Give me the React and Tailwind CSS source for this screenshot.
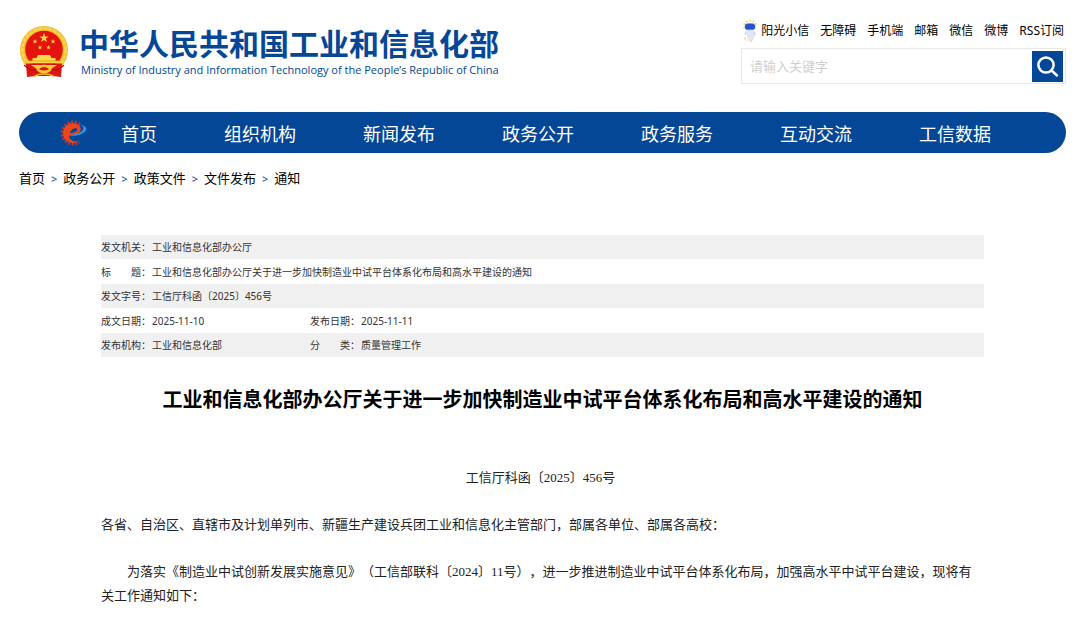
import React, { useState } from 'react';

const topLinks = ['无障碍', '手机端', '邮箱', '微信', '微博', 'RSS订阅'];

const navItems = ['首页', '组织机构', '新闻发布', '政务公开', '政务服务', '互动交流', '工信数据'];

const crumbs = ['首页', '政务公开', '政策文件', '文件发布', '通知'];

const metaRows = [
  [['发文机关：', '工业和信息化部办公厅']],
  [['标　　题：', '工业和信息化部办公厅关于进一步加快制造业中试平台体系化布局和高水平建设的通知']],
  [['发文字号：', '工信厅科函〔2025〕456号']],
  [['成文日期：', '2025-11-10'], ['发布日期：', '2025-11-11']],
  [['发布机构：', '工业和信息化部'], ['分　　类：', '质量管理工作']],
];

const STAR = 'M0 -1 L.235 -.324 .951 -.309 .38 .124 .588 .809 0 .4 -.588 .809 -.38 .124 -.951 -.309 -.235 -.324Z';

const Emblem = () => (
  <svg viewBox="0 0 50 54" className="w-[50px] h-[54px] shrink-0" aria-hidden="true">
    <circle cx="25" cy="25" r="24" fill="#f3bd2b" />
    <circle cx="25" cy="25" r="21.5" fill="none" stroke="#fad552" strokeWidth="2.5" strokeDasharray="4 1" />
    <circle cx="25" cy="24.5" r="18.8" fill="#e5130d" />
    <g fill="#fbd94a">
      <path d={STAR} transform="translate(25 13) scale(5)" />
      <path d={STAR} transform="translate(16 16.5) scale(2.6)" />
      <path d={STAR} transform="translate(34 16.5) scale(2.6)" />
      <path d={STAR} transform="translate(21 22.5) scale(2.4)" />
      <path d={STAR} transform="translate(29.5 22.5) scale(2.4)" />
      <path d="M19 30h12l1.5 3h4v3H42v2.500H8V36h5.500v-3h4z" />
    </g>
    <path d="M8 36h34" stroke="#e9a31f" strokeWidth="1" />
    <path d="M7 38.500h36l-1 13.500-8-1H16l-8 1z" fill="#dc1512" />
    <path d="M12 40h26l-6 4H18z" fill="#f8c93a" />
    <ellipse cx="25" cy="44" rx="7.5" ry="4.2" fill="#f8c93a" />
    <path d="M20 44q5-4 10 0-5 3-10 0z" fill="#e5130d" />
    <path d="M5 40q6 6 12 5M45 40q-6 6-12 5" fill="none" stroke="#b80f0d" strokeWidth="1.2" />
    <path d="M15 51.500q5-3 10-2.500 5-.5 10 2.500" fill="none" stroke="#f3bd2b" strokeWidth="1.6" />
  </svg>
);

const Robot = () => (
  <svg viewBox="0 0 14 22" className="w-[14px] h-[22px]" aria-hidden="true">
    <g fill="#f7cf4d">
      <circle cx="3.5" cy="1.5" r=".9" /><circle cx="7" cy=".9" r=".9" /><circle cx="10.5" cy="1.5" r=".9" />
      <circle cx="1.2" cy="4" r=".9" /><circle cx="12.8" cy="4" r=".9" /><circle cx=".9" cy="8" r=".8" />
      <circle cx="2" cy="18.5" r=".9" /><circle cx="8" cy="21" r=".9" /><circle cx="4.5" cy="20" r=".7" />
    </g>
    <rect x="1.5" y="3" width="11" height="7.6" rx="3.6" fill="#a9bff2" />
    <rect x="2" y="3.8" width="10" height="5.8" rx="2.8" fill="#2750cf" />
    <path d="M3.6 11h7.200l1.200 4.500-1.500 5H6l-2-4z" fill="#dfe7f8" />
    <path d="M3.6 11.500l-1.600 3.500M10.600 11.500l2 3.500" stroke="#c5d2ee" strokeWidth="1.300" />
  </svg>
);

const GearLogo = () => (
  <svg viewBox="0 0 28 28" className="w-7 h-7 shrink-0" aria-hidden="true">
    {/* gear teeth */}
    <path d="M21 5.2A11.2 11.2 0 1 0 20.500 23.400" fill="none" stroke="#d8301c" strokeWidth="2.600" strokeDasharray="2 1.700" />
    {/* gear body with the letter-like loop cut out */}
    <path d="M20.500 6.500A10 10 0 1 0 20.500 21.500c-3 1.500-7.500 1.200-9.300-1.400-.9-1.300-1-2.600-.8-3.900 5.500-.2 11-2 11.300-5.700.1-1.500-.5-3-1.200-4z" fill="#ee4519" />
    <path d="M10.800 14.200c.9-3 3.200-5 5.600-5 1.700 0 2.400.8 2 1.900-.7 1.900-3.900 3-7.600 3.100z" fill="#054797" />
    {/* orbit */}
    <path d="M9 16.400c8.500 1.600 17.700-1.800 18.200-6.400.2-2.400-2.600-3.900-6.400-3.500 2.900.4 4.200 1.700 3.500 3.500-1.300 3.500-8 6-15.300 6.400z" fill="#3596df" />
  </svg>
);

const SearchGlyph = () => (
  <svg viewBox="0 0 31 31" className="w-full h-full" fill="none" stroke="#fff" strokeWidth="2.500" aria-hidden="true">
    <circle cx="14" cy="14" r="7.600" />
    <path d="M19.500 19.500l5.500 5" strokeLinecap="round" />
  </svg>
);

const App = () => {
  const [keyword, setKeyword] = useState('');

  return (
    <div className="min-h-screen bg-white pl-[19px] pr-[14px] font-['Noto_Sans','Noto_Sans_CJK_SC',sans-serif] text-black [text-spacing-trim:space-all]">
      {/* Header */}
      <header className="flex items-start justify-between pt-[18px] h-28">
        <a href="#" className="flex items-start gap-[10px] pt-[7px]">
          <Emblem />
          <span className="block pt-px text-[#054797]">
            <span className="block text-[30px] leading-9 font-bold whitespace-nowrap">中华人民共和国工业和信息化部</span>
            <span className="block pl-[2px] font-['Open_Sans',sans-serif] text-[11px] leading-4 font-medium whitespace-nowrap">
              Ministry of Industry and Information Technology of the People’s Republic of China
            </span>
          </span>
        </a>

        <div className="w-[325px]">
          <div className="flex items-center justify-end gap-[11px] pr-[2px] pt-px h-6 text-xs whitespace-nowrap">
            <a href="#" className="flex items-center gap-1"><Robot />阳光小信</a>
            {topLinks.map((label) => (
              <a key={label} href="#">{label}</a>
            ))}
          </div>
          <form
            onSubmit={(e) => e.preventDefault()}
            className="mt-[6px] flex items-center h-9 border border-[#e8e8e8] pr-[2px]"
          >
            <input
              type="text"
              aria-label="请输入关键字"
              placeholder="请输入关键字"
              value={keyword}
              onChange={(e) => setKeyword(e.target.value)}
              className="flex-1 min-w-0 px-2 pt-[2px] text-[13px] outline-none placeholder:text-[#cfcfcf]"
            />
            <button type="submit" aria-label="搜索" className="w-[31px] h-[31px] bg-[#054797]">
              <SearchGlyph />
            </button>
          </form>
        </div>
      </header>

      {/* Main menu */}
      <nav className="flex items-center h-[41px] rounded-full bg-[#054797] pl-10 pr-[75px]">
        <GearLogo />
        <ul className="flex-1 flex justify-between pl-[34px] pt-[2px] text-lg text-white whitespace-nowrap">
          {navItems.map((item) => (
            <li key={item}><a href="#">{item}</a></li>
          ))}
        </ul>
      </nav>

      {/* Breadcrumb */}
      <div className="flex items-center gap-[6px] mt-4 h-5 text-[13px] whitespace-nowrap">
        {crumbs.map((crumb, i) => (
          <React.Fragment key={crumb}>
            {i > 0 && <span className="text-[11px] text-[#054797]">&gt;</span>}
            <a href="#">{crumb}</a>
          </React.Fragment>
        ))}
      </div>

      <main className="px-[82px] pt-[46px]">
        <table className="w-full table-fixed text-[10px] leading-4 text-[#333]">
          <colgroup>
            <col className="w-[51px]" />
            <col className="w-[158px]" />
            <col className="w-[51px]" />
            <col />
          </colgroup>
          <tbody>
            {metaRows.map((cells) => (
              <tr key={cells[0][0]} className="h-[25px] odd:h-6 odd:bg-[#f0f0f0]">
                {cells.map(([label, value]) => (
                  <React.Fragment key={label}>
                    <th scope="row" className="p-0 text-left font-normal whitespace-nowrap">{label}</th>
                    <td className="p-0" colSpan={cells.length === 1 ? 3 : 1}>{value}</td>
                  </React.Fragment>
                ))}
              </tr>
            ))}
          </tbody>
        </table>

        <h1 className="mt-[29px] text-center text-xl leading-7 font-bold">
          工业和信息化部办公厅关于进一步加快制造业中试平台体系化布局和高水平建设的通知
        </h1>

        <article className="mt-[52px] pr-1 space-y-[23px] font-['Liberation_Serif','Noto_Sans_CJK_SC',serif] text-[13px] leading-6 text-[#222]">
          <p className="text-center">工信厅科函〔2025〕456号</p>
          <p>各省、自治区、直辖市及计划单列市、新疆生产建设兵团工业和信息化主管部门，部属各单位、部属各高校：</p>
          <p className="indent-[2em]">
            为落实《制造业中试创新发展实施意见》（工信部联科〔2024〕11号），进一步推进制造业中试平台体系化布局，加强高水平中试平台建设，现将有关工作通知如下：
          </p>
        </article>
      </main>
    </div>
  );
};

export default App;
